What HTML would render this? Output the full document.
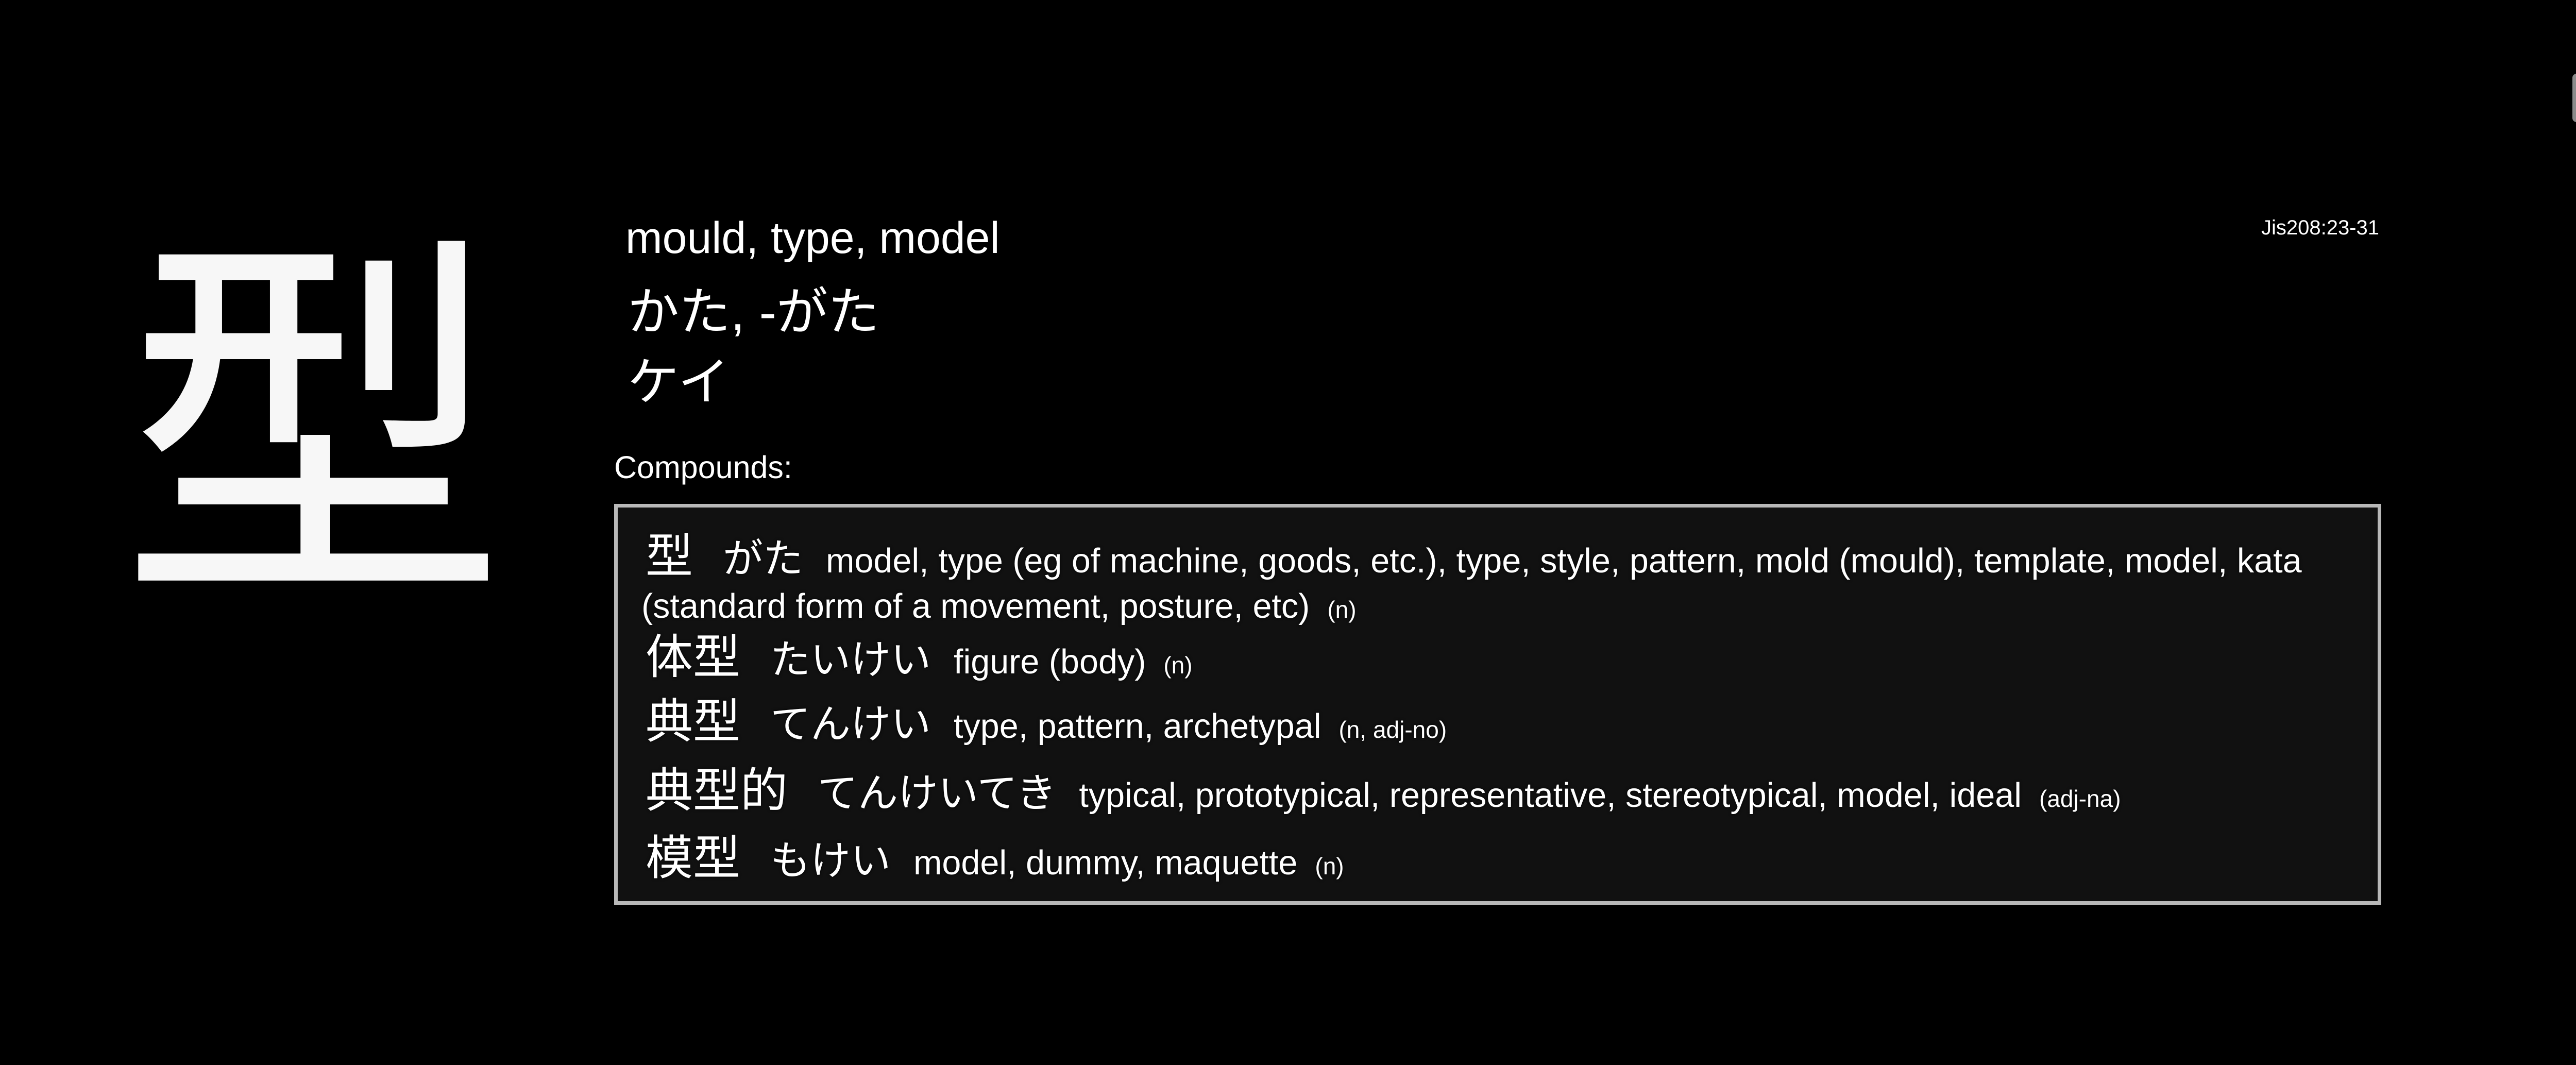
<!DOCTYPE html>
<html><head><meta charset="utf-8">
<style>
html,body{margin:0;padding:0;background:#000;}
body{width:5008px;height:2067px;position:relative;overflow:hidden;color:#fff;font-family:"Liberation Sans","Noto Sans CJK JP",sans-serif;}
.a{position:absolute;white-space:nowrap;text-shadow:0 0 6px #000;}
.big{left:233px;top:392px;font-size:750px;line-height:1;font-family:"Noto Sans CJK JP",sans-serif;color:#f7f7f7;}
.jp{font-family:"Liberation Sans","Noto Sans CJK JP",sans-serif;}
.box{position:absolute;left:1192px;top:978px;width:3416px;height:764px;border:7px solid #b8b8b8;background:#111;}
.row{position:absolute;left:1253px;white-space:nowrap;font-size:66.5px;line-height:100px;text-shadow:0 0 6px #000;}
.k{font-size:92px;font-family:"Noto Sans CJK JP",sans-serif;margin-right:58px;}
.r{font-size:78px;font-family:"Noto Sans CJK JP",sans-serif;margin-right:44px;}
.t{font-size:46px;margin-left:34px;}
.sb{position:absolute;left:4993px;top:143px;width:20px;height:94px;background:#8a8a8a;border-radius:8px;}
</style></head><body>
<div class="a big">型</div>
<div class="a" style="left:1214px;top:419px;font-size:86px;line-height:1;">mould, type, model</div>
<div class="a jp" style="left:1218px;top:556px;font-size:100px;line-height:1;">かた, -がた</div>
<div class="a jp" style="left:1218px;top:692px;font-size:100px;line-height:1;">ケイ</div>
<div class="a" style="left:1192px;top:877px;font-size:61px;line-height:1;">Compounds:</div>
<div class="a" style="right:390px;top:422px;font-size:40px;line-height:1;">Jis208:23-31</div>
<div class="sb"></div>
<div class="box"></div>
<div class="row" style="top:1028px;line-height:88px;"><span class="k">型</span><span class="r">がた</span>model, type (eg of machine, goods, etc.), type, style, pattern, mold (mould), template, model, kata<br><span style="margin-left:-8px">(standard form of a movement, posture, etc)</span><span class="t">(n)</span></div>
<div class="row" style="top:1218px;"><span class="k">体型</span><span class="r">たいけい</span>figure (body)<span class="t">(n)</span></div>
<div class="row" style="top:1343px;"><span class="k">典型</span><span class="r">てんけい</span>type, pattern, archetypal<span class="t">(n, adj-no)</span></div>
<div class="row" style="top:1477px;"><span class="k">典型的</span><span class="r">てんけいてき</span>typical, prototypical, representative, stereotypical, model, ideal<span class="t">(adj-na)</span></div>
<div class="row" style="top:1608px;"><span class="k">模型</span><span class="r">もけい</span>model, dummy, maquette<span class="t">(n)</span></div>
</body></html>
